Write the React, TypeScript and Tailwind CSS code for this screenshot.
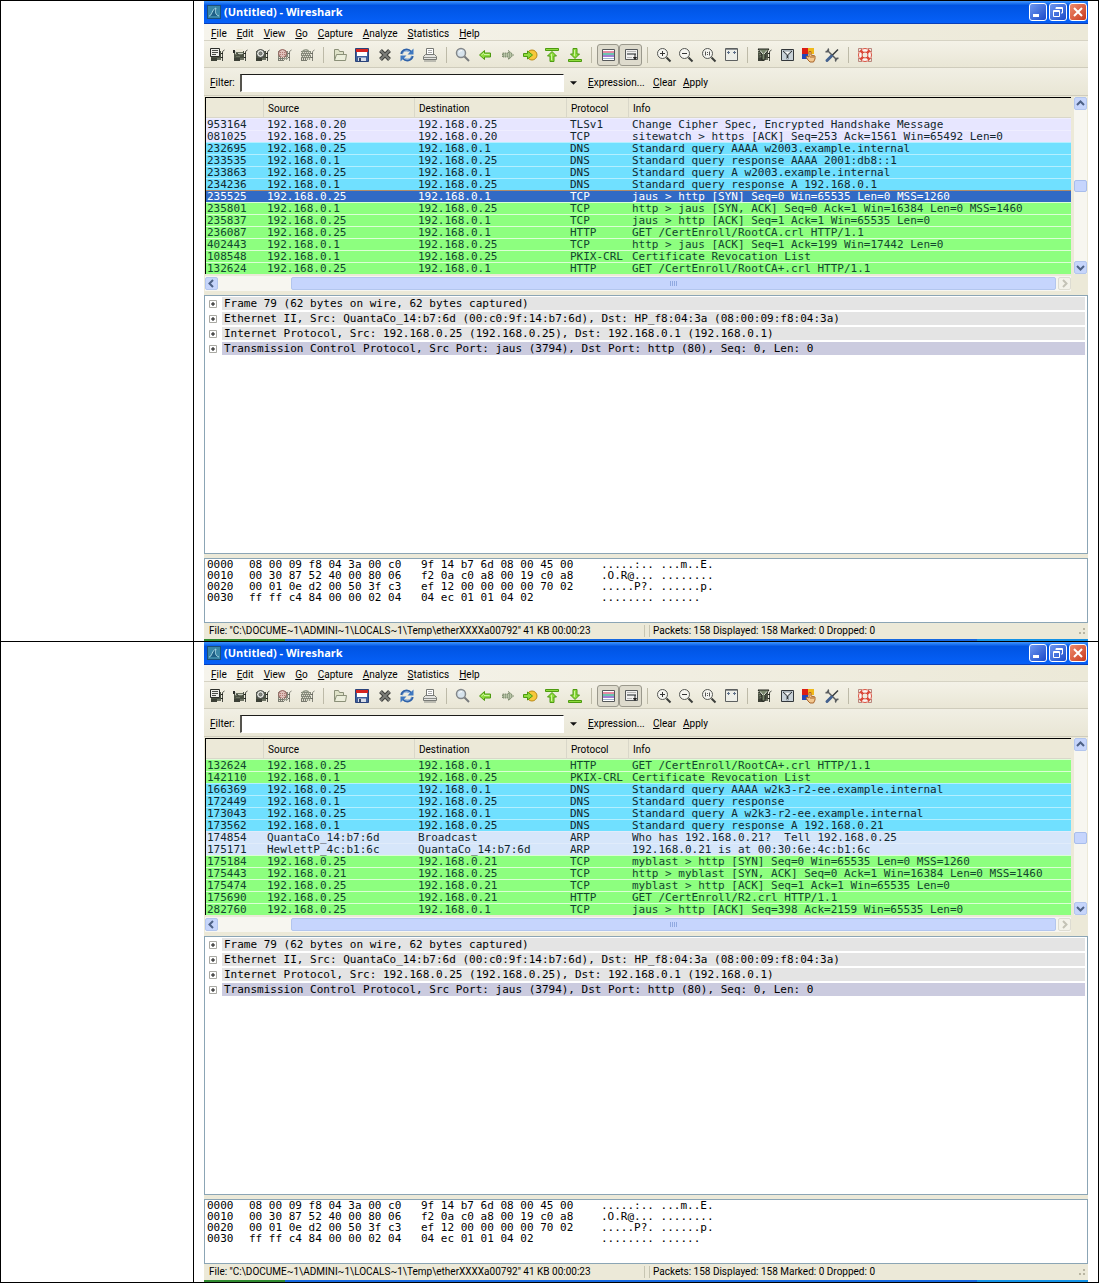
import React from 'react';
import clsx from 'clsx';

type Tone = 'tls' | 'dns' | 'http' | 'arp' | 'selected';

interface Packet {
  time: string;
  source: string;
  destination: string;
  protocol: string;
  info: string;
  tone: Tone;
}

interface Capture {
  packets: Packet[];
  scroll: number;
}

const toneClasses: Record<Tone, string> = {
  tls: 'bg-[#e7e6ff] text-[#12272e] *:border-[#efeeff]',
  dns: 'bg-[#70e0ff] text-[#12272e] *:border-[#b4efff]',
  http: 'bg-[#8dff7f] text-[#12472e] *:border-[#dcffd6]',
  arp: 'bg-[#d6e6fa] text-[#12272e] *:border-[#e0ecfb]',
  selected: 'bg-[#316ac5] text-white *:border-[#b08a68]',
};

const packet = (tone: Tone, time: string, source: string, destination: string, protocol: string, info: string): Packet => ({
  tone, time, source, destination, protocol, info,
});

const firstCapture: Packet[] = [
  packet('tls', '953164', '192.168.0.20', '192.168.0.25', 'TLSv1', 'Change Cipher Spec, Encrypted Handshake Message'),
  packet('tls', '081025', '192.168.0.25', '192.168.0.20', 'TCP', 'sitewatch > https [ACK] Seq=253 Ack=1561 Win=65492 Len=0'),
  packet('dns', '232695', '192.168.0.25', '192.168.0.1', 'DNS', 'Standard query AAAA w2003.example.internal'),
  packet('dns', '233535', '192.168.0.1', '192.168.0.25', 'DNS', 'Standard query response AAAA 2001:db8::1'),
  packet('dns', '233863', '192.168.0.25', '192.168.0.1', 'DNS', 'Standard query A w2003.example.internal'),
  packet('dns', '234236', '192.168.0.1', '192.168.0.25', 'DNS', 'Standard query response A 192.168.0.1'),
  packet('selected', '235525', '192.168.0.25', '192.168.0.1', 'TCP', 'jaus > http [SYN] Seq=0 Win=65535 Len=0 MSS=1260'),
  packet('http', '235801', '192.168.0.1', '192.168.0.25', 'TCP', 'http > jaus [SYN, ACK] Seq=0 Ack=1 Win=16384 Len=0 MSS=1460'),
  packet('http', '235837', '192.168.0.25', '192.168.0.1', 'TCP', 'jaus > http [ACK] Seq=1 Ack=1 Win=65535 Len=0'),
  packet('http', '236087', '192.168.0.25', '192.168.0.1', 'HTTP', 'GET /CertEnroll/RootCA.crl HTTP/1.1'),
  packet('http', '402443', '192.168.0.1', '192.168.0.25', 'TCP', 'http > jaus [ACK] Seq=1 Ack=199 Win=17442 Len=0'),
  packet('http', '108548', '192.168.0.1', '192.168.0.25', 'PKIX-CRL', 'Certificate Revocation List'),
  packet('http', '132624', '192.168.0.25', '192.168.0.1', 'HTTP', 'GET /CertEnroll/RootCA+.crl HTTP/1.1'),
];

const secondCapture: Packet[] = [
  packet('http', '132624', '192.168.0.25', '192.168.0.1', 'HTTP', 'GET /CertEnroll/RootCA+.crl HTTP/1.1'),
  packet('http', '142110', '192.168.0.1', '192.168.0.25', 'PKIX-CRL', 'Certificate Revocation List'),
  packet('dns', '166369', '192.168.0.25', '192.168.0.1', 'DNS', 'Standard query AAAA w2k3-r2-ee.example.internal'),
  packet('dns', '172449', '192.168.0.1', '192.168.0.25', 'DNS', 'Standard query response'),
  packet('dns', '173043', '192.168.0.25', '192.168.0.1', 'DNS', 'Standard query A w2k3-r2-ee.example.internal'),
  packet('dns', '173562', '192.168.0.1', '192.168.0.25', 'DNS', 'Standard query response A 192.168.0.21'),
  packet('arp', '174854', 'QuantaCo_14:b7:6d', 'Broadcast', 'ARP', 'Who has 192.168.0.21?  Tell 192.168.0.25'),
  packet('arp', '175171', 'HewlettP_4c:b1:6c', 'QuantaCo_14:b7:6d', 'ARP', '192.168.0.21 is at 00:30:6e:4c:b1:6c'),
  packet('http', '175184', '192.168.0.25', '192.168.0.21', 'TCP', 'myblast > http [SYN] Seq=0 Win=65535 Len=0 MSS=1260'),
  packet('http', '175443', '192.168.0.21', '192.168.0.25', 'TCP', 'http > myblast [SYN, ACK] Seq=0 Ack=1 Win=16384 Len=0 MSS=1460'),
  packet('http', '175474', '192.168.0.25', '192.168.0.21', 'TCP', 'myblast > http [ACK] Seq=1 Ack=1 Win=65535 Len=0'),
  packet('http', '175690', '192.168.0.25', '192.168.0.21', 'HTTP', 'GET /CertEnroll/R2.crl HTTP/1.1'),
  packet('http', '282760', '192.168.0.25', '192.168.0.1', 'TCP', 'jaus > http [ACK] Seq=398 Ack=2159 Win=65535 Len=0'),
];

// scroll is how far down the list's thumb sits, in percent of the free track
const captures: Capture[] = [
  { packets: firstCapture, scroll: 50 },
  { packets: secondCapture, scroll: 58 },
];

const details = [
  'Frame 79 (62 bytes on wire, 62 bytes captured)',
  'Ethernet II, Src: QuantaCo_14:b7:6d (00:c0:9f:14:b7:6d), Dst: HP_f8:04:3a (08:00:09:f8:04:3a)',
  'Internet Protocol, Src: 192.168.0.25 (192.168.0.25), Dst: 192.168.0.1 (192.168.0.1)',
  'Transmission Control Protocol, Src Port: jaus (3794), Dst Port: http (80), Seq: 0, Len: 0',
];

const hexDump = [
  ['0000', '08 00 09 f8 04 3a 00 c0', '9f 14 b7 6d 08 00 45 00', '.....:.. ...m..E.'],
  ['0010', '00 30 87 52 40 00 80 06', 'f2 0a c0 a8 00 19 c0 a8', '.O.R@... ........'],
  ['0020', '00 01 0e d2 00 50 3f c3', 'ef 12 00 00 00 00 70 02', '.....P?. ......p.'],
  ['0030', 'ff ff c4 84 00 00 02 04', '04 ec 01 01 04 02', '........ ......'],
];

const menus = ['File', 'Edit', 'View', 'Go', 'Capture', 'Analyze', 'Statistics', 'Help'];

const Icon: React.FC<{ children: React.ReactNode }> = ({ children }) => (
  <svg viewBox="0 0 16 16" className="size-4 shrink-0" fill="none" aria-hidden="true">
    {children}
  </svg>
);

const Card: React.FC<{ faded?: boolean; children?: React.ReactNode }> = ({ faded, children }) => (
  <Icon>
    <g opacity={faded ? 0.65 : 1}>
      <path d="M2 4h10v8H2z" fill="#4c5244" />
      <path d="M2 5.500h9M3 7.500h2M7 7.500h3M4 9.500h4" stroke="#6d7462" />
      <path d="M2 11h6v3H2z" fill="#3c4036" />
      <path d="M8 11h4v2H8z" fill="#6b7061" />
      <path d="M13.500 14V4.500L15.500 3" stroke="#4a4d45" />
      <path d="M12 6.500h2M12 10.500h2" stroke="#23251f" />
    </g>
    {children}
  </Icon>
);

const CardPlain = (
  <Card>
    <path d="M1.500 1.500h9v8h-9z" fill="#eeeeea" stroke="#2c2e2a" />
    <path d="M3 3.500h6M3 5.500h6M3 7.500h4" stroke="#4b4d49" />
  </Card>
);
const CardOptions = (
  <Card>
    <path d="M1 3h2v3H1z" fill="#2c2e2a" />
    <path d="M4 2h7v3H4z" fill="#ece9d8" />
    <path d="M3.500 4v3M6 6.500h5" stroke="#c9ccc1" />
  </Card>
);
const CardStart = (
  <Card>
    <circle cx="6.500" cy="6.500" r="4" fill="#dfe1dc" stroke="#3b3d39" />
    <circle cx="6.500" cy="6.500" r="1.500" fill="#8a8d87" stroke="#5d605a" />
  </Card>
);
const CardStop = (
  <Card faded>
    <circle cx="6.500" cy="6.500" r="4" fill="#dfc0ba" stroke="#8c5a54" />
    <path d="M4 5.500h5M4 7.500h5" stroke="#b07a72" strokeDasharray="1 1" />
    <path d="M3 10.500h9M3 12.500h9" stroke="#e2e0d2" strokeDasharray="1 1" />
  </Card>
);
const CardRestart = (
  <Card faded>
    <path d="M3 6c1-4 6-4 7-1" stroke="#8f9684" strokeWidth="1.500" />
    <path d="M2 5.500h9M2 9.500h9M3 12.500h9" stroke="#dddccd" strokeDasharray="1 1" />
    <path d="M3 7.500h9M3 11.500h9" stroke="#dddccd" strokeDasharray="1 1" />
  </Card>
);

const OpenIcon = (
  <Icon>
    <path d="M2.500 13.500v-11h4l1 2h4v3" fill="#dfe2c8" stroke="#8b9078" />
    <path d="M2.500 13.500l2-6h10l-1 6z" fill="#eceedb" stroke="#8b9078" />
  </Icon>
);
const SaveIcon = (
  <Icon>
    <path d="M1.500 1.500h13v13h-13z" fill="#3e5f9c" stroke="#2a437a" />
    <path d="M2 2h12v3H2z" fill="#d62420" />
    <path d="M3 5h10v4H3z" fill="#fff" />
    <path d="M4 10.500h8V14H4z" fill="#d8dde8" />
    <path d="M5 11h2v3H5z" fill="#33466e" />
  </Icon>
);
const CloseIcon = (
  <Icon>
    <path d="M3.500 3.500l9 9M12.500 3.500l-9 9" stroke="#3e3f3c" strokeWidth="4" />
    <path d="M3.500 3.500l9 9M12.500 3.500l-9 9" stroke="#7c7e7a" strokeWidth="2" />
  </Icon>
);
const ReloadIcon = (
  <Icon>
    <path d="M2.500 7C3.500 2.500 9 1.500 12 5" stroke="#2f62a8" strokeWidth="2.500" />
    <path d="M14.500 1.500v6h-6z" fill="#3f78c0" />
    <path d="M13.500 9C12.500 13.500 7 14.500 4 11" stroke="#2f62a8" strokeWidth="2.500" />
    <path d="M1.500 14.500v-6h6z" fill="#3f78c0" />
    <path d="M3.500 6.500C5 3.500 8.500 3 11 5M12.500 9.500C11 12.500 7.500 13 5 11" stroke="#a9c8ec" />
  </Icon>
);
const PrintIcon = (
  <Icon>
    <path d="M4.500 8V1.500h7V8" fill="#fff" stroke="#777975" />
    <path d="M6 3.500h4M6 5.500h4" stroke="#aaa" />
    <path d="M1.500 12.500v-3l2-2h9l2 2v3z" fill="#e4e4e0" stroke="#777975" />
    <path d="M2 10.500h12M2 14h12" stroke="#8b8d89" />
  </Icon>
);
const FindIcon = (
  <Icon>
    <circle cx="6" cy="6" r="4.500" fill="#d7e3ec" stroke="#83878a" strokeWidth="1.500" />
    <path d="M4 5.500C4.500 4 5.500 3.700 7 3.700" stroke="#fff" />
    <path d="M9.500 9.500l4.500 4.500" stroke="#777a7c" strokeWidth="2" />
  </Icon>
);
const BackIcon = (
  <Icon>
    <path d="M2.500 8l5-4.500v2.500h6v4h-6v2.500z" fill="#8fdc3e" stroke="#4d9a10" />
    <path d="M4.500 8L7 6M7 7.500h5.500" stroke="#d0f5a2" />
  </Icon>
);
const ForwardIcon = (
  <Icon>
    <path d="M13.500 8l-5-4.500v2.500h-6v4h6v2.500z" fill="#b9c6a6" stroke="#6c7a5c" strokeDasharray="1 1" />
    <path d="M3 7h9M3 9h9M9 5h2M9 11h2" stroke="#74826a" strokeDasharray="1 1" />
  </Icon>
);
const GoToIcon = (
  <Icon>
    <circle cx="10" cy="8" r="5" fill="#f7c83b" stroke="#bb8a14" />
    <path d="M1.500 6.500h4V4l5 4-5 4V9.500h-4z" fill="#8fdc3e" stroke="#4d9a10" />
  </Icon>
);
const FirstIcon = (
  <Icon>
    <path d="M1.500 1.500h13v2h-13z" fill="#8fdc3e" stroke="#4d9a10" />
    <path d="M8 4.500l4.500 4.500H10v5.500H6V9H3.500z" fill="#8fdc3e" stroke="#4d9a10" />
    <path d="M7.500 7v6" stroke="#d0f5a2" />
  </Icon>
);
const LastIcon = (
  <Icon>
    <path d="M1.500 12.500h13v2h-13z" fill="#8fdc3e" stroke="#4d9a10" />
    <path d="M8 11.500L3.500 7H6V1.500h4V7h2.500z" fill="#8fdc3e" stroke="#4d9a10" />
    <path d="M7.500 3v6" stroke="#d0f5a2" />
  </Icon>
);
const ColorizeIcon = (
  <Icon>
    <path d="M2.500 2.500h12v11h-12z" fill="#fff" stroke="#55585a" />
    <path d="M3 5h11" stroke="#e58aa4" strokeWidth="2" />
    <path d="M3 7h11" stroke="#6cc4b0" strokeWidth="2" />
    <path d="M3 9h11" stroke="#a07fd0" strokeWidth="2" />
    <path d="M3 11.500h11" stroke="#9fb4cf" />
  </Icon>
);
const AutoScrollIcon = (
  <Icon>
    <path d="M2.500 2.500h12v10h-12z" fill="#f0f0f0" stroke="#55585a" />
    <path d="M4 4.500h9M4 10.500h5" stroke="#b5b5b5" />
    <path d="M4 7h9" stroke="#85888a" strokeWidth="2" />
    <path d="M12 7v4M10.500 10.500h3L12 12.500z" fill="#222" stroke="#222" />
  </Icon>
);

const Lens: React.FC<{ children: React.ReactNode }> = ({ children }) => (
  <Icon>
    <circle cx="6.500" cy="6.500" r="5" fill="#f5f5f0" stroke="#555753" />
    <path d="M10.500 10.500l4 4" stroke="#3b3d3a" strokeWidth="2" />
    {children}
  </Icon>
);
const ZoomInIcon = <Lens><path d="M6.500 4v5M4 6.500h5" stroke="#333" /></Lens>;
const ZoomOutIcon = <Lens><path d="M4 6.500h5" stroke="#333" /></Lens>;
const ZoomResetIcon = <Lens><path d="M4.500 4.500v4M8.500 4.500v4M6.500 5v1M6.500 7v1" stroke="#555" /></Lens>;
const ResizeIcon = (
  <Icon>
    <path d="M2.500 1.500h12v12h-12z" fill="#edeee8" stroke="#5d6060" />
    <path d="M3 2.500h11" stroke="#8d9192" />
    <path d="M4 5.500h3M10 5.500h3M5.500 4v3M11.500 4v3" stroke="#5f7089" />
  </Icon>
);
const CaptureFilterIcon = (
  <Card>
    <path d="M2 2h11l-4 5v6H6V7z" fill="#78866c" stroke="#23251f" />
    <path d="M4 3.500l3 3.500M11 3.500L8 7" stroke="#dfe4d8" />
  </Card>
);
const DisplayFilterIcon = (
  <Icon>
    <path d="M2.500 2.500h12v11h-12z" fill="#c9d2d8" stroke="#33373a" />
    <path d="M4 4h9L9.500 8v4h-2V8z" fill="#f7f8f8" stroke="#8a949c" />
    <path d="M4 4l4.500 4L13 4M8.500 8v3" stroke="#33373a" />
  </Icon>
);
const ColorRulesIcon = (
  <Icon>
    <path d="M1 1h6v6H1z" fill="#dc1c14" />
    <path d="M7 1h6v6H7z" fill="#f0b81a" />
    <path d="M1 7h6v5H1z" fill="#2346b8" />
    <path d="M7 13l-2-3 1-1 2 1V4.500h2V8l4 1v3l-1.500 3H9z" fill="#f3c890" stroke="#a8652a" />
    <path d="M10 9v2M12 9v2" stroke="#a8652a" />
  </Icon>
);
const PreferencesIcon = (
  <Icon>
    <path d="M3 3l10 10" stroke="#5a5d5f" strokeWidth="1.500" />
    <path d="M1.500 4.500C3.500 5.500 5.500 3.500 4 1.500M14.500 11.500C12.500 10.500 10.500 12.500 12 14.500" stroke="#5a5d5f" strokeWidth="1.500" />
    <path d="M14 2.500L8 8.500" stroke="#35383a" strokeWidth="1.500" />
    <path d="M7.500 9L3 13.500" stroke="#44628f" strokeWidth="3" strokeLinecap="round" />
  </Icon>
);
const HelpIcon = (
  <Icon>
    <path d="M1.500 5V1.500H5M11 1.500h3.500V5M14.500 11v3.500H11M5 14.500H1.500V11" stroke="#b9867e" />
    <circle cx="8" cy="8" r="4.800" stroke="#fbf6f3" strokeWidth="3.500" />
    <circle cx="8" cy="8" r="6.500" stroke="#d9503f" />
    <circle cx="8" cy="8" r="3" stroke="#d9503f" />
    <path d="M3.500 3.500L6 6M12.500 3.500L10 6M3.500 12.500L6 10M12.500 12.500L10 10" stroke="#dc4a3a" strokeWidth="2.500" />
  </Icon>
);

const toolGroups: { label: string; icon: React.ReactNode; pressed?: boolean }[][] = [
  [
    { label: 'Interfaces', icon: CardPlain },
    { label: 'Capture options', icon: CardOptions },
    { label: 'Start capture', icon: CardStart },
    { label: 'Stop capture', icon: CardStop },
    { label: 'Restart capture', icon: CardRestart },
  ],
  [
    { label: 'Open', icon: OpenIcon },
    { label: 'Save as', icon: SaveIcon },
    { label: 'Close', icon: CloseIcon },
    { label: 'Reload', icon: ReloadIcon },
    { label: 'Print', icon: PrintIcon },
  ],
  [
    { label: 'Find packet', icon: FindIcon },
    { label: 'Go back', icon: BackIcon },
    { label: 'Go forward', icon: ForwardIcon },
    { label: 'Go to packet', icon: GoToIcon },
    { label: 'First packet', icon: FirstIcon },
    { label: 'Last packet', icon: LastIcon },
  ],
  [
    { label: 'Colorize', icon: ColorizeIcon, pressed: true },
    { label: 'Auto scroll', icon: AutoScrollIcon, pressed: true },
  ],
  [
    { label: 'Zoom in', icon: ZoomInIcon },
    { label: 'Zoom out', icon: ZoomOutIcon },
    { label: 'Zoom 1:1', icon: ZoomResetIcon },
    { label: 'Resize columns', icon: ResizeIcon },
  ],
  [
    { label: 'Capture filters', icon: CaptureFilterIcon },
    { label: 'Display filters', icon: DisplayFilterIcon },
    { label: 'Coloring rules', icon: ColorRulesIcon },
    { label: 'Preferences', icon: PreferencesIcon },
  ],
  [{ label: 'Help contents', icon: HelpIcon }],
];

const Mnemonic: React.FC<{ text: string }> = ({ text }) => (
  <span><span className="underline underline-offset-1">{text[0]}</span>{text.slice(1)}</span>
);

const TitleBar = () => (
  <header className="flex h-[23px] items-center bg-linear-to-b from-[#3d95ff] from-0% via-[#0054e3] via-20% to-[#0660f8] border-b border-[#0a3fb8] pl-[3px] pr-px">
    <svg viewBox="0 0 14 14" className="size-[14px]" aria-hidden="true">
      <path d="M0 0h14v14H0z" fill="#1b4f78" />
      <path d="M1 1h12v12H1z" fill="#3a86a6" />
      <path d="M2 11c3 0 3-7 7-8-1 3-1 7 3 8z" fill="#1f5f86" />
      <path d="M2 11c3 0 3-7 7-8-1 3-1 7 3 8" fill="none" stroke="#a9d9e6" />
    </svg>
    <h1 className="ml-[3px] font-['Open_Sans',sans-serif] text-[11px] font-bold text-white">(Untitled) - Wireshark</h1>
    <div className="ml-auto flex gap-[2px]">
      <button aria-label="Minimize" className="size-[18px] rounded-[3px] border border-white bg-linear-to-br from-[#6f97f0] to-[#1c48c8]">
        <svg viewBox="0 0 16 16"><path d="M3 10h6v3H3z" fill="#fff" /></svg>
      </button>
      <button aria-label="Restore" className="size-[18px] rounded-[3px] border border-white bg-linear-to-br from-[#6f97f0] to-[#1c48c8]">
        <svg viewBox="0 0 16 16" fill="none" stroke="#fff"><path d="M6 5V3.500h6.500V9H11M3.500 6.500h6v6h-6zM3 7.500h7M6 4.500h7" /></svg>
      </button>
      <button aria-label="Close" className="size-[18px] rounded-[3px] border border-white bg-linear-to-br from-[#ee8a6c] to-[#c8361a]">
        <svg viewBox="0 0 16 16" stroke="#fff" strokeWidth="2"><path d="M4 4l8 8M12 4l-8 8" /></svg>
      </button>
    </div>
  </header>
);

const Toolbar = () => (
  <div className="h-[27px] border-b border-[#cfccbc] bg-linear-to-b from-[#f4f2e8] to-[#e9e6d5] pt-px pl-[2px]">
    <div className="flex h-full w-[670px] items-center">
      {toolGroups.map((group, i) => (
        <React.Fragment key={i}>
          {i > 0 && <span className="mx-[5px] h-4 w-px shrink-0 bg-[#bdbaa8]" />}
          {group.map((tool) => (
            <button
              key={tool.label}
              aria-label={tool.label}
              className={clsx(
                'flex h-[22px] min-w-0 flex-1 items-center justify-center rounded-[3px] border',
                tool.pressed ? 'border-[#9a988c] bg-[#dedbcd]' : 'border-transparent'
              )}
            >
              {tool.icon}
            </button>
          ))}
        </React.Fragment>
      ))}
    </div>
  </div>
);

const FilterBar: React.FC<{ id: string }> = ({ id }) => (
  <div className="flex h-[28px] items-center border-b border-[#cfccbc] bg-linear-to-b from-[#f1efe4] to-[#e9e6d5] pt-[2px] pl-[6px]">
    <label htmlFor={id} className="w-[30px]"><Mnemonic text="Filter:" /></label>
    <input id={id} className="h-[18px] w-[324px] border-t border-l-2 border-r border-b border-t-[#1d1d1b] border-l-[#55544e] border-r-white border-b-white bg-white px-1 outline-none" />
    <button aria-label="Filter history" className="flex w-[19px] justify-center">
      <svg viewBox="0 0 8 4" className="h-1 w-[7px]"><path d="M0 0h8L4 4z" fill="#111" /></svg>
    </button>
    <button className="ml-[5px] w-[65px] text-left"><Mnemonic text="Expression..." /></button>
    <button className="w-[30px] text-left"><Mnemonic text="Clear" /></button>
    <button><Mnemonic text="Apply" /></button>
  </div>
);

const ScrollButton: React.FC<{ label: string; path: string; disabled?: boolean }> = ({ label, path, disabled }) => (
  <button
    aria-label={label}
    disabled={disabled}
    className={clsx(
      'size-[13px] shrink-0 rounded-[2px] border',
      disabled ? 'border-[#dddcd2] bg-[#f3f2ea] text-[#c3c2b6]' : 'border-[#b3c6ee] bg-[#c6d5fb] text-[#4d6185]'
    )}
  >
    <svg viewBox="0 0 11 11" fill="none" stroke="currentColor" strokeWidth="2"><path d={path} /></svg>
  </button>
);

const PacketList: React.FC<Capture> = ({ packets, scroll }) => (
  <section className="flex gap-[3px] bg-[#ece9d8] pt-px pr-px pl-px">
    <div className="min-w-0 flex-1">
      <div className="border-t border-l border-black">
        <table className="w-full table-fixed border-separate border-spacing-0 text-left">
          <colgroup>
            <col className="w-[58px]" />
            <col className="w-[151px]" />
            <col className="w-[152px]" />
            <col className="w-[62px]" />
            <col />
          </colgroup>
          <thead>
            <tr className="*:h-5 *:border-b *:border-[#d9d7c9] *:pt-[2px] *:pl-1 *:font-normal">
              <th aria-label="Time" className="border-r border-r-[#c7c5b2]" />
              <th className="border-r border-r-[#c7c5b2]">Source</th>
              <th className="border-r border-r-[#c7c5b2]">Destination</th>
              <th className="border-r border-r-[#c7c5b2]">Protocol</th>
              <th>Info</th>
            </tr>
          </thead>
          <tbody className="font-['DejaVu_Sans_Mono',monospace] text-[11px] leading-[11px] whitespace-pre">
            {packets.map((p) => (
              <tr key={p.time} className={clsx('*:h-3 *:border-t', toneClasses[p.tone])}>
                <td className="pl-px">{p.time}</td>
                <td className="pl-[3px]">{p.source}</td>
                <td className="pl-[3px]">{p.destination}</td>
                <td className="pl-[3px]">{p.protocol}</td>
                <td className="pl-[3px]">{p.info}</td>
              </tr>
            ))}
          </tbody>
        </table>
      </div>
      <div className="mt-[2px] mb-1 flex h-[15px] items-center bg-[#f7f6f0]">
        <ScrollButton label="Scroll left" path="M7 2L3.500 5.500 7 9" />
        <div className="ml-[73px] flex h-[13px] flex-1 items-center justify-center gap-px rounded-[2px] border border-[#b3c6ee] bg-[#c6d5fd]">
          {[0, 1, 2, 3].map((i) => <span key={i} className="h-[5px] w-px bg-[#90a9e0]" />)}
        </div>
        <span className="w-[2px]" />
        <ScrollButton label="Scroll right" path="M4 2l3.500 3.500L4 9" disabled />
      </div>
    </div>
    <div className="mb-[21px] flex w-[13px] flex-col bg-[#f7f6f0]">
      <ScrollButton label="Scroll up" path="M2 7l3.500-3.500L9 7" />
      <div style={{ flexGrow: scroll }} />
      <div className="h-3 shrink-0 rounded-[2px] border border-[#a8bdec] bg-[#c6d5fd]" />
      <div style={{ flexGrow: 100 - scroll }} />
      <ScrollButton label="Scroll down" path="M2 4l3.500 3.500L9 4" />
    </div>
  </section>
);

const PacketDetails = () => (
  <section className="flex h-[259px] flex-col gap-[2px] border border-[#8ba5b5] bg-white pt-px pr-[2px] pl-1 font-['DejaVu_Sans_Mono',monospace] text-[11px] leading-[13px]">
    {details.map((line, i) => (
      <div key={line} className="flex h-[13px] items-center gap-[5px]">
        <button aria-label="Expand" className="size-2 shrink-0">
          <svg viewBox="0 0 8 8" fill="none"><path d="M.5.5h7v7h-7z" stroke="#a9a9a3" /><path d="M2 4h4M4 2v4" stroke="#111" /></svg>
        </button>
        <p className={clsx('flex-1 whitespace-pre pl-[2px]', i === 3 ? 'bg-[#cbcbdf]' : 'bg-[#e4e4e4]')}>{line}</p>
      </div>
    ))}
  </section>
);

const HexDump = () => (
  <section className="mt-1 h-[65px] border border-[#8ba5b5] bg-white pl-[2px] font-['DejaVu_Sans_Mono',monospace] text-[11px] leading-[11px]">
    {hexDump.map(([offset, left, right, ascii]) => (
      <div key={offset} className="flex whitespace-pre">
        <span className="w-[42px]">{offset}</span>
        <span className="w-[172px]">{left}</span>
        <span className="w-[180px]">{right}</span>
        <span>{ascii}</span>
      </div>
    ))}
  </section>
);

const StatusBar = () => (
  <footer className="flex h-4 items-center">
    <p className="w-[441px] border-r border-[#c7c5b2] pl-[5px]">File: "C:\DOCUME~1\ADMINI~1\LOCALS~1\Temp\etherXXXXa00792" 41 KB 00:00:23</p>
    <p className="ml-1 flex-1 border-l border-[#c7c5b2] pl-[3px]">Packets: 158 Displayed: 158 Marked: 0 Dropped: 0</p>
    <svg viewBox="0 0 8 8" className="mr-[2px] size-2" fill="#b8b5a2"><path d="M5 1h2v2H5zM5 5h2v2H5zM1 5h2v2H1z" /></svg>
  </footer>
);

const WiresharkWindow: React.FC<Capture & { id: string }> = ({ id, packets, scroll }) => (
  <div className="min-w-0 flex-1 bg-[#ece9d8] font-[Roboto,sans-serif] text-[10px] leading-3 text-black">
    <TitleBar />
    <nav className="flex h-[17px] items-center gap-[10px] border-b border-[#d6d3c4] bg-linear-to-r from-[#f6f4ec] to-[#ece9d8] pt-[3px] pl-[7px]">
      {menus.map((menu) => <button key={menu}><Mnemonic text={menu} /></button>)}
    </nav>
    <Toolbar />
    <FilterBar id={id} />
    <PacketList packets={packets} scroll={scroll} />
    <PacketDetails />
    <HexDump />
    <StatusBar />
    <div className="flex h-[2px] bg-[#1668e0]">
      <span className="w-[81px] bg-[#2f8a2f]" />
      <span className="ml-auto w-[111px] bg-[#1493e6]" />
    </div>
  </div>
);

export const App: React.FC = () => (
  <main className="border-x border-t border-black bg-white">
    {captures.map((capture, i) => (
      <div key={i} className="flex border-b border-black">
        <div className="w-[193px] shrink-0 border-r border-black" />
        <div className="flex min-w-0 flex-1 px-[10px]">
          <WiresharkWindow id={`filter-${i}`} {...capture} />
        </div>
      </div>
    ))}
  </main>
);
export default App;
